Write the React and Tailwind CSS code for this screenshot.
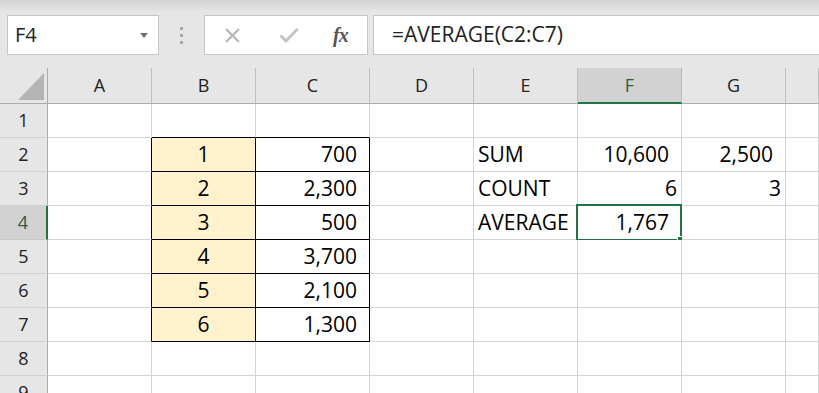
import React from 'react';

const cols = ['A', 'B', 'C', 'D', 'E', 'F', 'G', ''];

const rows = [
  { n: 1 },
  { n: 2, B: '1', C: '700', E: 'SUM', F: '10,600', G: '2,500' },
  { n: 3, B: '2', C: '2,300', E: 'COUNT', F: '6', G: '3' },
  { n: 4, B: '3', C: '500', E: 'AVERAGE', F: '1,767' },
  { n: 5, B: '4', C: '3,700' },
  { n: 6, B: '5', C: '2,100' },
  { n: 7, B: '6', C: '1,300' },
  { n: 8 },
  { n: 9 },
];

// numbers with a thousands format sit a bit further from the right edge
const padFor = (v) => (v && v.length > 1 ? 'justify-end pr-[12px]' : 'justify-end pr-[4px]');

const Cell = ({ row, col }) => {
  const v = row[col];
  const inTable = row.n >= 2 && row.n <= 7;
  const tableCol = col === 'B' || col === 'C';

  const rightBorder =
    (inTable && (col === 'A' || tableCol)) ? 'border-r-black' : 'border-r-[#d4d4d4]';
  const bottomBorder =
    ((inTable || row.n === 1) && tableCol) ? 'border-b-black' : 'border-b-[#d4d4d4]';
  const fill = inTable && col === 'B' ? 'bg-[#fff2cc]' : 'bg-white';

  let align = 'justify-start pl-[4px]';
  if (col === 'B') align = 'justify-center';
  else if (col === 'C') align = 'justify-end pr-[12px]';
  else if (col === 'F' || col === 'G') align = padFor(v);

  const selected = row.n === 4 && col === 'F';

  return (
    <div
      className={`relative h-[34px] flex items-center border-r border-b ${rightBorder} ${bottomBorder} ${fill} ${align} text-[21px] text-black`}
    >
      {v}
      {selected && (
        <div className="absolute -left-[2px] -top-[2px] w-[106px] h-[37px] border-2 border-[#217346]">
          <div className="absolute -right-[4px] -bottom-[4px] w-[7px] h-[7px] bg-[#217346] border border-white" />
        </div>
      )}
    </div>
  );
};

const App = () => {
  return (
    <div className="w-[819px] h-[393px] overflow-hidden bg-white font-['Open_Sans',sans-serif]">
      {/* Name box + formula bar */}
      <div className="h-[68px] flex items-start pt-[15px] pl-[7px] bg-linear-to-b from-[#d4d4d4] to-[#e6e6e6] to-[18%]">
        <div className="w-[152px] h-[40px] bg-white border border-[#c6c6c6] flex items-center justify-between pl-[7px] pr-[10px]">
          <span className="text-[20px] text-[#222]">F4</span>
          <svg width="8" height="5" viewBox="0 0 8 5">
            <path d="M0 0 L8 0 L4 5 Z" fill="#6f6f6f" />
          </svg>
        </div>
        <div className="w-[45px] h-[40px] flex flex-col items-center justify-center gap-[4px]">
          <div className="w-[3px] h-[3px] bg-[#a6a6a6]" />
          <div className="w-[3px] h-[3px] bg-[#a6a6a6]" />
          <div className="w-[3px] h-[3px] bg-[#a6a6a6]" />
        </div>
        <div className="w-[164px] h-[40px] bg-white border border-[#c6c6c6] flex items-center pl-[19px]">
          <svg width="17" height="17" viewBox="0 0 17 17">
            <path d="M2 2 L15 15 M15 2 L2 15" stroke="#b3b3b3" strokeWidth="2" fill="none" />
          </svg>
          <svg className="ml-[38px]" width="20" height="16" viewBox="0 0 20 16">
            <path d="M1.5 8.5 L7 14 L18.5 2" stroke="#c4c4c4" strokeWidth="3" fill="none" />
          </svg>
          <span className="ml-[34px] text-[20px] italic font-bold text-[#555] font-['Liberation_Serif',serif] tracking-[-1px]">
            fx
          </span>
        </div>
        <div className="ml-[5px] flex-1 h-[40px] bg-white border border-[#c6c6c6] border-r-0 flex items-center pl-[18px]">
          <span className="text-[21px] text-[#222]">=AVERAGE(C2:C7)</span>
        </div>
      </div>

      {/* Sheet grid */}
      <div className="grid grid-cols-[48px_104px_104px_114px_104px_104px_104px_104px_1fr]">
        {/* header row */}
        <div className="h-[36px] bg-[#e6e6e6] border-r border-b border-r-[#ababab] border-b-[#ababab] flex items-end justify-end pr-[3px] pb-[3px]">
          <svg width="26" height="27" viewBox="0 0 26 27">
            <path d="M0 27 L26 0 L26 27 Z" fill="#b4b4b4" />
          </svg>
        </div>
        {cols.map((c) =>
          c === 'F' ? (
            <div
              key="F"
              className="h-[36px] bg-[#d2d2d2] border-r border-r-[#b8b8b8] border-b-2 border-b-[#217346] flex items-center justify-center text-[18px] text-[#2e5c3f]"
            >
              F
            </div>
          ) : (
            <div
              key={c || 'H'}
              className="h-[36px] bg-[#e6e6e6] border-r border-r-[#bebebe] border-b border-b-[#ababab] flex items-center justify-center text-[18px] text-[#222]"
            >
              {c}
            </div>
          )
        )}

        {rows.map((row) => (
          <React.Fragment key={row.n}>
            {row.n === 4 ? (
              <div className="h-[34px] bg-[#d2d2d2] border-r-2 border-r-[#217346] border-b border-b-[#c8c8c8] flex items-center justify-center text-[18px] text-[#2e5c3f]">
                {row.n}
              </div>
            ) : (
              <div className="h-[34px] bg-[#e6e6e6] border-r border-r-[#ababab] border-b border-b-[#d0d0d0] flex items-center justify-center text-[18px] text-[#222]">
                {row.n}
              </div>
            )}
            {cols.map((c) => (
              <Cell key={c || 'H'} row={row} col={c} />
            ))}
          </React.Fragment>
        ))}
      </div>
    </div>
  );
};

export default App;
